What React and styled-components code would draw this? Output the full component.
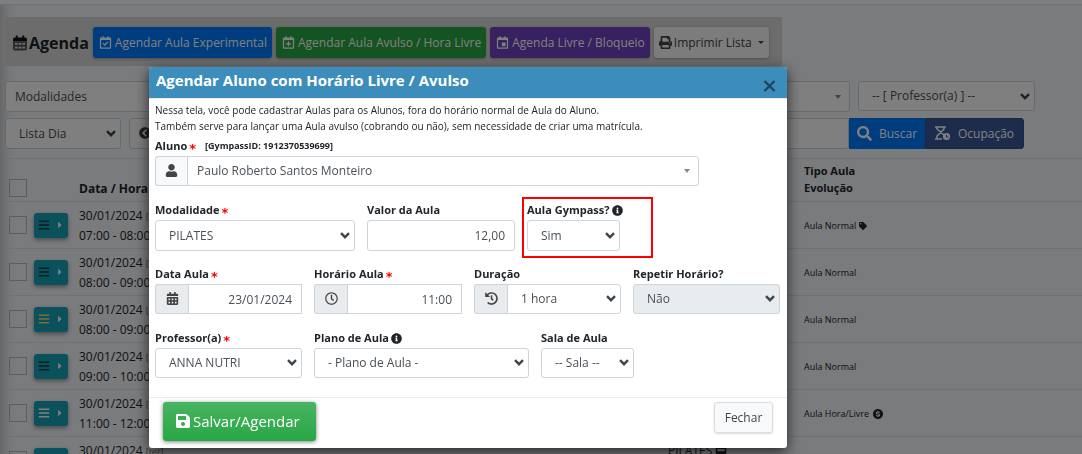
import React from "react";
import styled, { createGlobalStyle, css } from "styled-components";
import { FaUser, FaSave, FaPrint, FaInfoCircle, FaHistory, FaRegClock, FaCalendarAlt, FaSearch, FaTag, FaChevronCircleLeft, FaBars, FaCaretRight, FaCalendarWeek } from "react-icons/fa";
import { BiCalendarCheck, BiCalendarPlus, BiCalendarEvent, BiSolidDollarCircle } from "react-icons/bi";

const Global = createGlobalStyle`
  * { box-sizing: border-box; }
  body { margin: 0; background: #f4f6f9; color: #212529; font: 12px/20px "Open Sans", "Noto Sans", sans-serif; overflow: hidden; }
  button, input, select { font: inherit; margin: 0; }
  svg { flex: none; }
`;

const Page = styled.div`
  height: 100vh;
  overflow: hidden;
  box-shadow: inset 14px 0 14px -12px rgba(0, 0, 0, 0.25);
`;
const TopBar = styled.header`
  height: 5px;
  background: #fff;
  border-bottom: 1px solid #dee2e6;
`;
const Content = styled.main`
  padding: 12px 0 0 5px;
`;
const Toolbar = styled.div`
  display: flex;
  align-items: center;
  gap: 4px;
  width: 777px;
  max-width: 100%;
  height: 49px;
  padding: 2px 7px 0 8px;
  background: #d8d8d8;
`;
const Title = styled.h1`
  display: flex;
  align-items: center;
  gap: 2px;
  margin: 0;
  font-size: 16px;
  font-weight: 700;
`;
const tones = {
  blue: "#007bff",
  green: "#28a745",
  purple: "#6f42c1",
  light: "#f8f9fa",
  navy: "#3b5998",
};
const Action = styled.button`
  display: inline-flex;
  align-items: center;
  justify-content: center;
  gap: 2px;
  height: 31px;
  padding: 0 5px;
  border: 0;
  border-radius: 3px;
  white-space: nowrap;
  color: ${(p) => (p.$tone === "light" ? "#444" : "#fff")};
  background: ${(p) => tones[p.$tone]};
  box-shadow: 0 1px 3px rgba(0, 0, 0, 0.3);
  svg { font-size: ${(p) => (p.$tone === "light" ? 13 : 15)}px; }
`;
const Caret = styled.span`
  margin-left: 4px;
  border: 3px solid transparent;
  border-top-color: currentColor;
  border-bottom: 0;
`;
const Filters = styled.div`
  display: flex;
  gap: 8px;
  margin-top: ${(p) => p.$top}px;
`;
const SelectWrap = styled.span`
  position: relative;
  display: block;
  flex: ${(p) => (p.$width ? `0 0 ${p.$width}px` : "1")};
  min-width: 0;
  > svg {
    position: absolute;
    right: 5px;
    top: 50%;
    margin-top: -4px;
    pointer-events: none;
  }
`;
const field = css`
  width: 100%;
  height: ${(p) => p.$h || 31}px;
  border: 1px solid #ced4da;
  border-radius: 3px;
  background: #fff;
  color: #495057;
  appearance: none;
  outline: none;
`;
const Select = styled.select`
  ${field}
  padding: 0 20px 0 ${(p) => (p.$searchable ? 9 : 13)}px;
  ${(p) => p.$joined && "border-radius: 0 3px 3px 0;"}
  &:disabled { background: #e9ecef; opacity: 1; }
`;
const Input = styled.input`
  ${field}
  min-width: 0;
  padding: 0 9px;
  text-align: right;
  ${(p) => p.$joined && "border-radius: 0;"}
`;
const Search = styled.div`
  display: flex;
  width: 895px;
`;
const SearchAction = styled(Action)`
  flex: 0 0 ${(p) => p.$width}px;
  gap: 7px;
  border: ${(p) => (p.$tone === "navy" ? "1px solid #334d84" : "0")};
  border-radius: ${(p) => (p.$tone === "navy" ? "0 3px 3px 0" : "0")};
  box-shadow: none;
`;
const StepBack = styled.button`
  flex: none;
  width: 32px;
  height: 31px;
  padding: 2px 0 0;
  border: 1px solid #ced4da;
  border-radius: 3px 0 0 3px;
  background: #f8f9fa;
  color: #343a40;
`;
const Table = styled.table`
  width: 100%;
  margin-top: 9px;
  border-collapse: collapse;
  table-layout: fixed;
  th, td {
    padding: 0;
    border-top: 1px solid #dee2e6;
    text-align: left;
    height: 47px;
    line-height: 19px;
  }
  thead th { height: 43px; vertical-align: bottom; }
`;
const Small = styled.span`
  display: inline-flex;
  align-items: center;
  gap: 3px;
  font-size: 9px;
`;
const HeadSmall = styled.span`
  display: block;
  padding-bottom: 5px;
  font-size: 11px;
  line-height: 17px;
`;
const HeadDate = styled.span`
  display: block;
  padding-bottom: 3px;
  font-size: 12px;
`;
const Check = styled.input`
  display: block;
  appearance: none;
  width: 18px;
  height: 18px;
  margin: 0 0 ${(p) => p.$bottom || 0}px 4px;
  border: 1px solid #bbb;
`;
const RowMenu = styled.button`
  display: flex;
  align-items: center;
  justify-content: center;
  gap: 5px;
  width: 34px;
  height: 25px;
  padding: 0;
  border: 0;
  border-radius: 3px;
  background: #17a2b8;
  color: #fff;
  box-shadow: 0 2px 4px rgba(0, 0, 0, 0.4);
  svg:first-child { color: ${(p) => p.$tint}; font-size: 12px; }
  svg:last-child { font-size: 10px; }
`;
const Weekday = styled.span`
  margin-left: 3px;
  font-size: 9px;
  color: #777;
`;

const Backdrop = styled.div`
  position: fixed;
  inset: 0;
  padding: 67px 0 0 149px;
  background: rgba(0, 0, 0, 0.5);
`;
const Dialog = styled.form`
  width: 638px;
  max-width: 100%;
  border-radius: 3px;
  background: #fff;
  overflow: hidden;
  box-shadow: 0 4px 14px rgba(0, 0, 0, 0.7);
`;
const DialogHead = styled.header`
  display: flex;
  justify-content: space-between;
  height: 32px;
  padding: 0 11px 0 7px;
  border-bottom: 1px solid #e9ecef;
  background: #3c8dbc;
  color: #fff;
  h2 { margin: 0; font-size: 15px; line-height: 26px; font-weight: 700; }
`;
const Close = styled.button`
  display: flex;
  align-items: center;
  padding: 6px 0 0;
  border: 0;
  background: none;
  color: #1e465e;
`;
const Body = styled.div`
  padding: 3px 7px 19px 6px;
`;
const Note = styled.p`
  margin: 0;
  font-size: 10px;
  line-height: 16px;
`;
const Row = styled.div`
  display: flex;
  gap: 12px;
  margin-top: ${(p) => p.$top}px;
`;
const Field = styled.div`
  flex: 0 0 ${(p) => p.$width}px;
  min-width: 0;
`;
const Label = styled.label`
  display: flex;
  align-items: center;
  gap: 2px;
  height: 18px;
  padding-bottom: 2px;
  font-size: 11px;
  font-weight: 700;
  white-space: nowrap;
`;
const Star = styled.span`
  color: #f00;
  font: 700 13px/10px "DejaVu Sans", sans-serif;
  padding-top: 6px;
`;
const MemberId = styled.small`
  margin-left: 7px;
  font-size: 9px;
`;
const Group = styled.div`
  display: flex;
`;
const Addon = styled.span`
  display: flex;
  align-items: center;
  justify-content: center;
  flex: none;
  width: ${(p) => (p.$pale ? 32 : 33)}px;
  height: 30px;
  padding-bottom: 2px;
  border: 1px solid #ced4da;
  border-right: 0;
  border-radius: 3px 0 0 3px;
  background: ${(p) => (p.$pale ? "#f8f9fa" : "#e9ecef")};
  color: #444;
  font-size: 13px;
`;
const Highlight = styled.div`
  width: 131px;
  margin: -5px 0 -7px -5px;
  padding: 3px 31px 5px 3px;
  border: 2px solid #f00;
`;
const Foot = styled.footer`
  display: flex;
  align-items: flex-start;
  justify-content: space-between;
  padding: 4px 14px 7px;
  border-top: 1px solid #e9ecef;
`;
const Save = styled.button`
  display: flex;
  align-items: center;
  gap: 2px;
  width: 153px;
  height: 39px;
  padding: 0 0 2px 12px;
  border: 0;
  border-radius: 3px;
  background: linear-gradient(#48b461, #28a745);
  color: #fff;
  font-size: 15px;
  box-shadow: 0 1px 4px rgba(0, 0, 0, 0.5);
  svg { font-size: 16px; }
`;
const Dismiss = styled.button`
  width: 59px;
  height: 31px;
  padding: 0;
  border: 1px solid #ddd;
  border-radius: 3px;
  background: #f8f9fa;
  color: #444;
  box-shadow: 0 1px 2px rgba(0, 0, 0, 0.15);
`;

const Chevron = () => (
  <svg width="10" height="8" viewBox="0 0 10 8" fill="none" stroke="#3f464d" strokeWidth="2.4">
    <path d="M1 1.2 5 5.2 9 1.2" />
  </svg>
);
const Arrow = () => (
  <svg width="14" height="8" viewBox="0 0 14 8" fill="#888"><path d="M4 2h6L7 6z" /></svg>
);
const DuoCalendar = () => (
  <svg width="14" height="16" viewBox="0 0 15 16">
    <path fill="#111" d="M0 6V4q0-2 2-2h1V0h2v2h5V0h2v2h1q2 0 2 2v2z" />
    <path fill="#555" fillRule="evenodd" d="M0 6h15v8q0 2-2 2H2q-2 0-2-2zM2 8v2h3V8zm4 0v2h3V8zm4 0v2h3V8zM2 12v2h3v-2zm4 0v2h3v-2zm4 0v2h3v-2z" />
  </svg>
);
const HourglassClock = () => (
  <svg width="16" height="15" viewBox="0 0 16 15" fill="none" stroke="#fff" strokeWidth="1.6">
    <path d="M0 1h11M0 13h7M2 1v2l7 6M9 1v2L2 10v3" />
    <circle cx="11.5" cy="10.5" r="3.6" fill="#fff" stroke="none" />
    <path d="M11.5 8.5v2.5h2" stroke="#3b5998" strokeWidth="1" />
  </svg>
);
const Cross = () => (
  <svg width="13" height="12" viewBox="0 0 13 12" fill="none" stroke="currentColor" strokeWidth="2.4">
    <path d="M1.5 1l10 10M11.5 1l-10 10" />
  </svg>
);

function Pick({ id, label, children, width, h, searchable, disabled, joined }) {
  return (
    <SelectWrap $width={width}>
      <Select id={id} aria-label={label} $h={h} $joined={joined} $searchable={searchable} disabled={disabled}>
        <option>{children}</option>
      </Select>
      {searchable ? <Arrow /> : <Chevron />}
    </SelectWrap>
  );
}

const lessons = [
  ["07:00 - 08:00", "Aula Normal", "#163c44", <FaTag key="t" size={8} />],
  ["08:00 - 09:00", "Aula Normal", "#163c44"],
  ["08:00 - 09:00", "Aula Normal", "#ffd966"],
  ["09:00 - 10:00", "Aula Normal", "#163c44"],
  ["11:00 - 12:00", "Aula Hora/Livre", "#fff", <BiSolidDollarCircle key="d" size={12} />],
  ["12:00 - 13:00", "Aula Normal", "#fff"],
];

export default function App() {
  return (
    <>
      <Global />
      <Page>
        <TopBar />
        <Content>
          <Toolbar>
            <Title><DuoCalendar />Agenda</Title>
            <Action $tone="blue"><BiCalendarCheck />Agendar Aula Experimental</Action>
            <Action $tone="green"><BiCalendarPlus />Agendar Aula Avulso / Hora Livre</Action>
            <Action $tone="purple"><BiCalendarEvent />Agenda Livre / Bloqueio</Action>
            <Action $tone="light"><FaPrint />Imprimir Lista<Caret /></Action>
          </Toolbar>
          <Filters $top={15}>
            <Pick label="Modalidades" width={845} searchable>Modalidades</Pick>
            <Pick label="Professor" width={177} h={30}>-- [ Professor(a) ] --</Pick>
          </Filters>
          <Filters $top={6}>
            <Pick label="Período" width={116}>Lista Dia</Pick>
            <Search>
              <StepBack type="button" aria-label="Anterior"><FaChevronCircleLeft /></StepBack>
              <Input aria-label="Data" />
              <SearchAction $tone="blue" $width={76}><FaSearch />Buscar</SearchAction>
              <SearchAction $tone="navy" $width={99}><HourglassClock />Ocupação</SearchAction>
            </Search>
          </Filters>
          <Table>
            <colgroup>
              <col width="29" /><col width="45" /><col width="589" /><col width="136" /><col />
            </colgroup>
            <thead>
              <tr>
                <th><Check type="checkbox" aria-label="Todos" $bottom={4} /></th>
                <th />
                <th><HeadDate>Data / Hora</HeadDate></th>
                <th />
                <th><HeadSmall>Tipo Aula<br />Evolução</HeadSmall></th>
              </tr>
            </thead>
            <tbody>
              {lessons.map(([time, kind, tint, mark], i) => (
                <tr key={i}>
                  <td><Check type="checkbox" aria-label={time} /></td>
                  <td><RowMenu type="button" aria-label="Menu" $tint={tint}><FaBars /><FaCaretRight /></RowMenu></td>
                  <td>30/01/2024<Weekday>[ter]</Weekday><br />{time}</td>
                  <td>{i === 5 && <>PILATES <FaCalendarWeek /><br />&nbsp;</>}</td>
                  <td><Small>{kind}{mark}</Small></td>
                </tr>
              ))}
            </tbody>
          </Table>
        </Content>
      </Page>
      <Backdrop>
        <Dialog role="dialog" aria-labelledby="dialog-title">
          <DialogHead>
            <h2 id="dialog-title">Agendar Aluno com Horário Livre / Avulso</h2>
            <Close type="button" aria-label="Fechar janela"><Cross /></Close>
          </DialogHead>
          <Body>
            <Note>Nessa tela, você pode cadastrar Aulas para os Alunos, fora do horário normal de Aula do Aluno.</Note>
            <Note>Também serve para lançar uma Aula avulso (cobrando ou não), sem necessidade de criar uma matrícula.</Note>
            <Row $top={4}>
              <Field $width={544}>
                <Label htmlFor="aluno">Aluno<Star>*</Star><MemberId>[GympassID: 1912370539699]</MemberId></Label>
                <Group>
                  <Addon $pale><FaUser /></Addon>
                  <Pick id="aluno" h={30} joined searchable>Paulo Roberto Santos Monteiro</Pick>
                </Group>
              </Field>
            </Row>
            <Row $top={16}>
              <Field $width={200}>
                <Label htmlFor="modalidade">Modalidade<Star>*</Star></Label>
                <Pick id="modalidade">PILATES</Pick>
              </Field>
              <Field $width={148}>
                <Label htmlFor="valor">Valor da Aula</Label>
                <Input id="valor" defaultValue="12,00" />
              </Field>
              <Highlight>
                <Label htmlFor="gympass">Aula Gympass? <FaInfoCircle /></Label>
                <Pick id="gympass">Sim</Pick>
              </Highlight>
            </Row>
            <Row $top={15}>
              <Field $width={147}>
                <Label htmlFor="data">Data Aula<Star>*</Star></Label>
                <Group><Addon><FaCalendarAlt /></Addon><Input id="data" $h={30} $joined defaultValue="23/01/2024" /></Group>
              </Field>
              <Field $width={148}>
                <Label htmlFor="horario">Horário Aula<Star>*</Star></Label>
                <Group><Addon><FaRegClock /></Addon><Input id="horario" $h={30} $joined defaultValue="11:00" /></Group>
              </Field>
              <Field $width={147}>
                <Label htmlFor="duracao">Duração</Label>
                <Group><Addon><FaHistory /></Addon><Pick id="duracao" h={30} joined>1 hora</Pick></Group>
              </Field>
              <Field $width={147}>
                <Label htmlFor="repetir">Repetir Horário?</Label>
                <Pick id="repetir" h={30} disabled>Não</Pick>
              </Field>
            </Row>
            <Row $top={16}>
              <Field $width={147}>
                <Label htmlFor="professor">Professor(a)<Star>*</Star></Label>
                <Pick id="professor" h={30}>ANNA NUTRI</Pick>
              </Field>
              <Field $width={215}>
                <Label htmlFor="plano">Plano de Aula <FaInfoCircle /></Label>
                <Pick id="plano" h={30}>- Plano de Aula -</Pick>
              </Field>
              <Field $width={93}>
                <Label htmlFor="sala">Sala de Aula</Label>
                <Pick id="sala" h={30}>-- Sala --</Pick>
              </Field>
            </Row>
          </Body>
          <Foot>
            <Save type="button"><FaSave />Salvar/Agendar</Save>
            <Dismiss type="button">Fechar</Dismiss>
          </Foot>
        </Dialog>
      </Backdrop>
    </>
  );
}
